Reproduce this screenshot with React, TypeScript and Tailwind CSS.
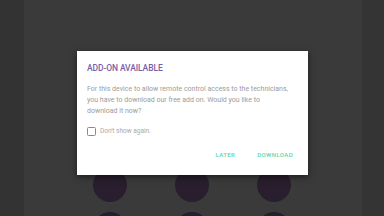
import React from "react";

// Add-on prompt over a dimmed launcher grid.

const font = { fontFamily: "Roboto, 'Liberation Sans', Arial, sans-serif" };

function Tile() {
  return <div className="h-[34px] w-[34px] rounded-full bg-[#281e2d]" />;
}

export default function App() {
  return (
    <div className="relative flex h-[216px] w-[384px] overflow-hidden bg-[#3a3a3a]" style={font}>
      <div className="w-[24px] bg-[#333333]" />
      <div className="flex-1">
        {/* dimmed app tiles behind the dialog */}
        <div className="grid grid-cols-[34px_34px_34px] gap-x-[48px] gap-y-[10px] pl-[69px] pt-[168px]">
          {Array.from({ length: 6 }).map((_, i) => (
            <Tile key={i} />
          ))}
        </div>
      </div>
      <div className="w-[22px] bg-[#343434]" />

      {/* modal */}
      <div className="absolute left-[77px] top-[51px] flex h-[124px] w-[231px] flex-col bg-white px-[10px] pt-[12px] shadow-[0_2px_6px_rgba(0,0,0,0.5)]">
        <h1 className="text-[8.5px] font-medium leading-[10px] tracking-[-0.1px] text-[#7760aa]">
          ADD-ON AVAILABLE
        </h1>
        <p className="mt-[11px] text-[7px] leading-[11px] text-[#9c9c9c]">
          For this device to allow remote control access to the technicians,
          <br />
          you have to download our free add on. Would you like to
          <br />
          download it now?
        </p>
        <label className="mt-[10px] flex items-center gap-[4px]">
          <span className="h-[9px] w-[9px] rounded-[1.5px] border border-[#8a8a8a]" />
          <span className="text-[6.5px] text-[#a8a8a8]">Don't show again.</span>
        </label>
        <div className="mt-auto mb-[16px] flex justify-end gap-[22px] pr-[5px] text-[6px] font-medium tracking-[0.4px] text-[#5ad6b0]">
          <span>LATER</span>
          <span>DOWNLOAD</span>
        </div>
      </div>
    </div>
  );
}
